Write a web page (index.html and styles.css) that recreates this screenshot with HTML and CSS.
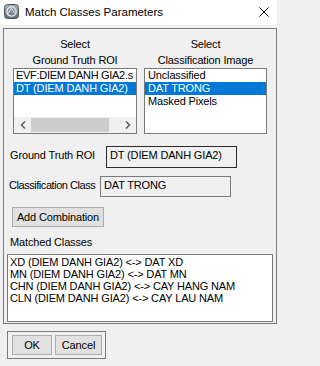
FILE: index.html
```html
<!DOCTYPE html>
<html>
<head>
<meta charset="utf-8">
<link rel="stylesheet" href="styles.css">
</head>
<body>
<div class="titlebar">
  <svg class="app-icon" width="15" height="15" viewBox="0 0 15 15">
    <defs>
      <linearGradient id="ig" x1="0" y1="0" x2="0" y2="1">
        <stop offset="0" stop-color="#aab3bc"/>
        <stop offset="1" stop-color="#5f6b77"/>
      </linearGradient>
    </defs>
    <rect x="0.5" y="0.5" width="14" height="14" rx="3" fill="url(#ig)" stroke="#4d5660"/>
    <circle cx="7.5" cy="7.5" r="4.6" fill="none" stroke="#e8ecef" stroke-width="1.3"/>
    <path d="M4.2 9.2 L7.6 4.4 L10.8 9.4" fill="none" stroke="#dfe4e8" stroke-width="1"/>
  </svg>
  <span class="title">Match Classes Parameters</span>
  <svg class="close" width="10" height="10" viewBox="0 0 10 10">
    <path d="M0.5 0.5 L9.5 9.5 M9.5 0.5 L0.5 9.5" stroke="#000" stroke-width="1"/>
  </svg>
</div>

<div class="group">
  <div class="pickers">
    <div class="picker">
      <div class="picker-label">Select<br>Ground Truth ROI</div>
      <div class="listbox roi-list">
        <div class="items">
          <div class="item item-tight">EVF:DIEM DANH GIA2.s</div>
          <div class="item selected">DT (DIEM DANH GIA2)</div>
        </div>
        <div class="hscroll">
          <div class="arrow">
            <svg width="6" height="8" viewBox="0 0 6 8"><path d="M5 0.5 L1.5 4 L5 7.5" fill="none" stroke="#606060" stroke-width="1.6"/></svg>
          </div>
          <div class="track"><div class="thumb"></div></div>
          <div class="arrow">
            <svg width="6" height="8" viewBox="0 0 6 8"><path d="M1 0.5 L4.5 4 L1 7.5" fill="none" stroke="#606060" stroke-width="1.6"/></svg>
          </div>
        </div>
      </div>
    </div>
    <div class="picker">
      <div class="picker-label">Select<br>Classification Image</div>
      <div class="listbox class-list">
        <div class="items">
          <div class="item">Unclassified</div>
          <div class="item selected">DAT TRONG</div>
          <div class="item">Masked Pixels</div>
        </div>
      </div>
    </div>
  </div>

  <div class="field field-roi">
    <span class="field-label">Ground Truth ROI</span>
    <div class="textbox textbox-dark">DT (DIEM DANH GIA2)</div>
  </div>
  <div class="field field-class">
    <span class="field-label">Classification Class</span>
    <div class="textbox">DAT TRONG</div>
  </div>

  <button class="btn btn-add">Add Combination</button>

  <div class="matched-label">Matched Classes</div>
  <div class="listbox matched-list">
    <div class="mitem">XD (DIEM DANH GIA2) &lt;-&gt; DAT XD</div>
    <div class="mitem">MN (DIEM DANH GIA2) &lt;-&gt; DAT MN</div>
    <div class="mitem">CHN (DIEM DANH GIA2) &lt;-&gt; CAY HANG NAM</div>
    <div class="mitem">CLN (DIEM DANH GIA2) &lt;-&gt; CAY LAU NAM</div>
  </div>
</div>

<div class="actions">
  <button class="btn btn-ok">OK</button>
  <button class="btn btn-cancel">Cancel</button>
</div>
</body>
</html>
```

FILE: styles.css
```css
* { box-sizing: border-box; }

html, body {
  margin: 0;
  padding: 0;
}

body {
  width: 277px;
  height: 366px;
  overflow: hidden;
  background: #f0f0f0;
  font-family: "Liberation Sans", Arial, sans-serif;
  font-size: 11px;
  letter-spacing: -0.15px;
  color: #000;
}

.titlebar {
  height: 25px;
  background: #fff;
  display: flex;
  align-items: center;
  padding-left: 4px;
}

.app-icon {
  flex: none;
  margin-top: -2px;
}

.title {
  font-size: 11.5px;
  letter-spacing: 0;
  margin-left: 6px;
  margin-top: -1px;
}

.close {
  margin-left: auto;
  margin-right: 8px;
  margin-top: -1px;
}

.group {
  margin: 3px 0 0 3px;
  width: 274px;
  height: 296px;
  border: 1px solid #7a7a7a;
  padding-top: 7px;
  display: flex;
  flex-direction: column;
}

.pickers {
  display: grid;
  grid-template-columns: 124px 123px;
  column-gap: 7px;
  padding-left: 9px;
}

.picker-label {
  text-align: center;
  line-height: 16px;
  height: 32px;
}

.listbox {
  background: #fff;
  border: 1px solid #7a7a7a;
  height: 66px;
  display: flex;
  flex-direction: column;
  overflow: hidden;
}

.items {
  flex: 1;
  overflow: hidden;
}

.item {
  height: 13px;
  line-height: 13px;
  padding-left: 2px;
  white-space: nowrap;
}

.item-tight {
  letter-spacing: -0.3px;
}

.item.selected {
  background: #0078d7;
  color: #fff;
}

.hscroll {
  height: 16px;
  flex: none;
  display: flex;
  background: #f0f0f0;
}

.arrow {
  width: 17px;
  flex: none;
  display: flex;
  align-items: center;
  justify-content: center;
}

.track {
  flex: 1;
  display: flex;
  align-items: stretch;
  padding: 1px 0;
}

.thumb {
  width: 78px;
  background: #cdcdcd;
}

.class-list .item {
  padding-left: 3px;
}

.field {
  display: flex;
  align-items: flex-start;
}

.field-roi {
  margin-top: 12px;
  padding-left: 6px;
}

.field-class {
  margin-top: 8px;
  padding-left: 5px;
}

.field-label {
  padding-top: 3px;
  line-height: 13px;
  white-space: nowrap;
}

.field-roi .field-label { width: 96px; }
.field-class .field-label {
  width: 91px;
  letter-spacing: -0.45px;
}

.textbox {
  width: 131px;
  height: 21px;
  border: 1px solid #7a7a7a;
  padding: 2px 0 0 3px;
  line-height: 13px;
  white-space: nowrap;
  background: #f0f0f0;
}

.textbox-dark {
  height: 22px;
  border-color: #2b2b2b;
}

.btn {
  font-family: inherit;
  font-size: 11px;
  letter-spacing: -0.15px;
  color: #000;
  background: #e1e1e1;
  border: 1px solid #adadad;
  height: 20px;
  padding: 0;
  margin: 0;
  line-height: 18px;
}

.btn-add {
  align-self: flex-start;
  margin: 10px 0 0 8px;
  width: 92px;
}

.matched-label {
  margin: 9px 0 0 6px;
  line-height: 13px;
}

.matched-list {
  margin: 5px 0 0 3px;
  width: 266px;
  height: 68px;
  display: block;
  padding: 1px 0 0 2px;
}

.mitem {
  line-height: 12px;
  height: 12px;
  white-space: nowrap;
}

.actions {
  margin: 7px 0 0 7px;
  width: 99px;
  height: 28px;
  border: 1px solid #7a7a7a;
  padding: 3px 0 0 4px;
  display: flex;
  gap: 3px;
}

.btn-ok { width: 40px; }
.btn-cancel { width: 47px; }
```
